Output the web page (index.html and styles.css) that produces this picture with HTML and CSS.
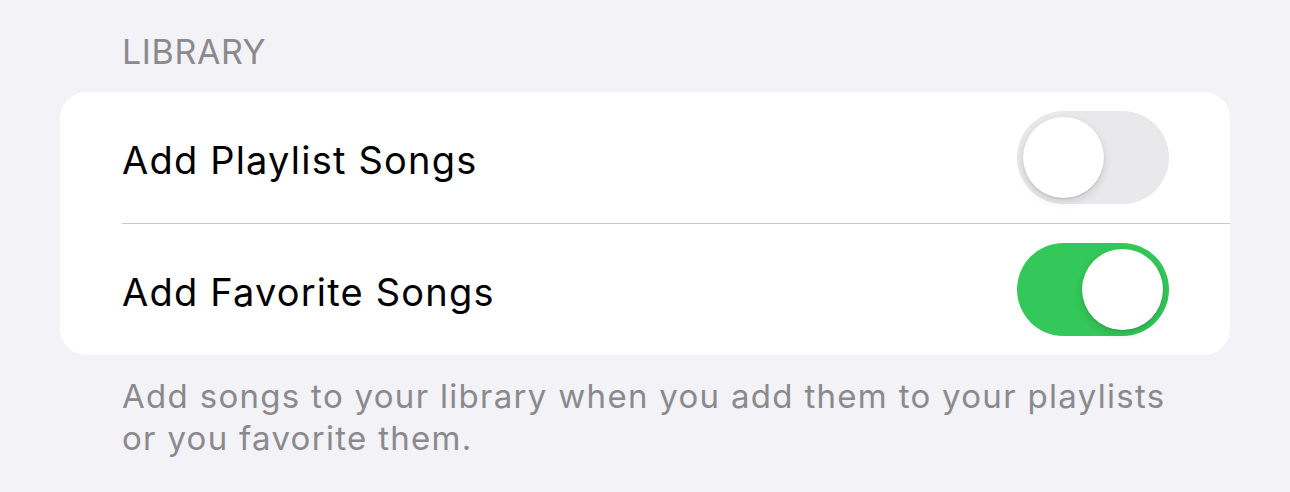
FILE: index.html
```html
<!DOCTYPE html>
<html lang="en">
<head>
    <meta charset="UTF-8">
    <meta name="viewport" content="width=device-width, initial-scale=1.0">
    <title>Library Settings</title>
    <link rel="stylesheet" href="styles.css">
</head>
<body>
    <div class="page">
        <div class="section-header">LIBRARY</div>

        <div class="card">
            <div class="row">
                <div class="row-inner">
                    <span class="label">Add Playlist Songs</span>
                    <div class="switch"><div class="knob"></div></div>
                </div>
            </div>
            <div class="row">
                <div class="row-inner">
                    <span class="label">Add Favorite Songs</span>
                    <div class="switch on"><div class="knob"></div></div>
                </div>
            </div>
        </div>

        <div class="section-footer">
            Add songs to your library when you add them to your playlists<br>
            or you favorite them.
        </div>
    </div>
</body>
</html>
```

FILE: styles.css
```css
body {
    margin: 0;
    background: #f2f2f7;
    font-family: Inter, "Noto Sans", sans-serif;
}
.page {
    padding: 30px 60px 0;
}
.section-header {
    padding-left: 62px;
    font-size: 34px;
    letter-spacing: 0.6px;
    line-height: 44px;
    color: #8a8a8e;
    margin-bottom: 18px;
}
.card {
    background: #fff;
    border-radius: 26px;
}
.row {
    padding-left: 62px;
}
.row-inner {
    display: flex;
    align-items: center;
    justify-content: space-between;
    height: 131px;
    padding-right: 61px;
    border-bottom: 1px solid #c8c8ca;
}
.row:last-child .row-inner {
    border-bottom: none;
}
.label {
    font-size: 38px;
    letter-spacing: 1.2px;
    color: #000;
    padding-top: 4px;
}
.switch {
    display: flex;
    justify-content: flex-start;
    width: 152px;
    height: 93px;
    padding: 6px;
    box-sizing: border-box;
    border-radius: 47px;
    background: #e9e9eb;
}
.switch.on {
    justify-content: flex-end;
    background: #34c759;
}
.knob {
    width: 81px;
    height: 81px;
    border-radius: 50%;
    background: #fff;
    box-shadow: 0 4px 10px rgba(0,0,0,0.12), 0 1px 2px rgba(0,0,0,0.12);
}
.section-footer {
    padding-left: 62px;
    margin-top: 20px;
    font-size: 33px;
    letter-spacing: 1.3px;
    line-height: 42px;
    color: #8a8a8e;
}
```
